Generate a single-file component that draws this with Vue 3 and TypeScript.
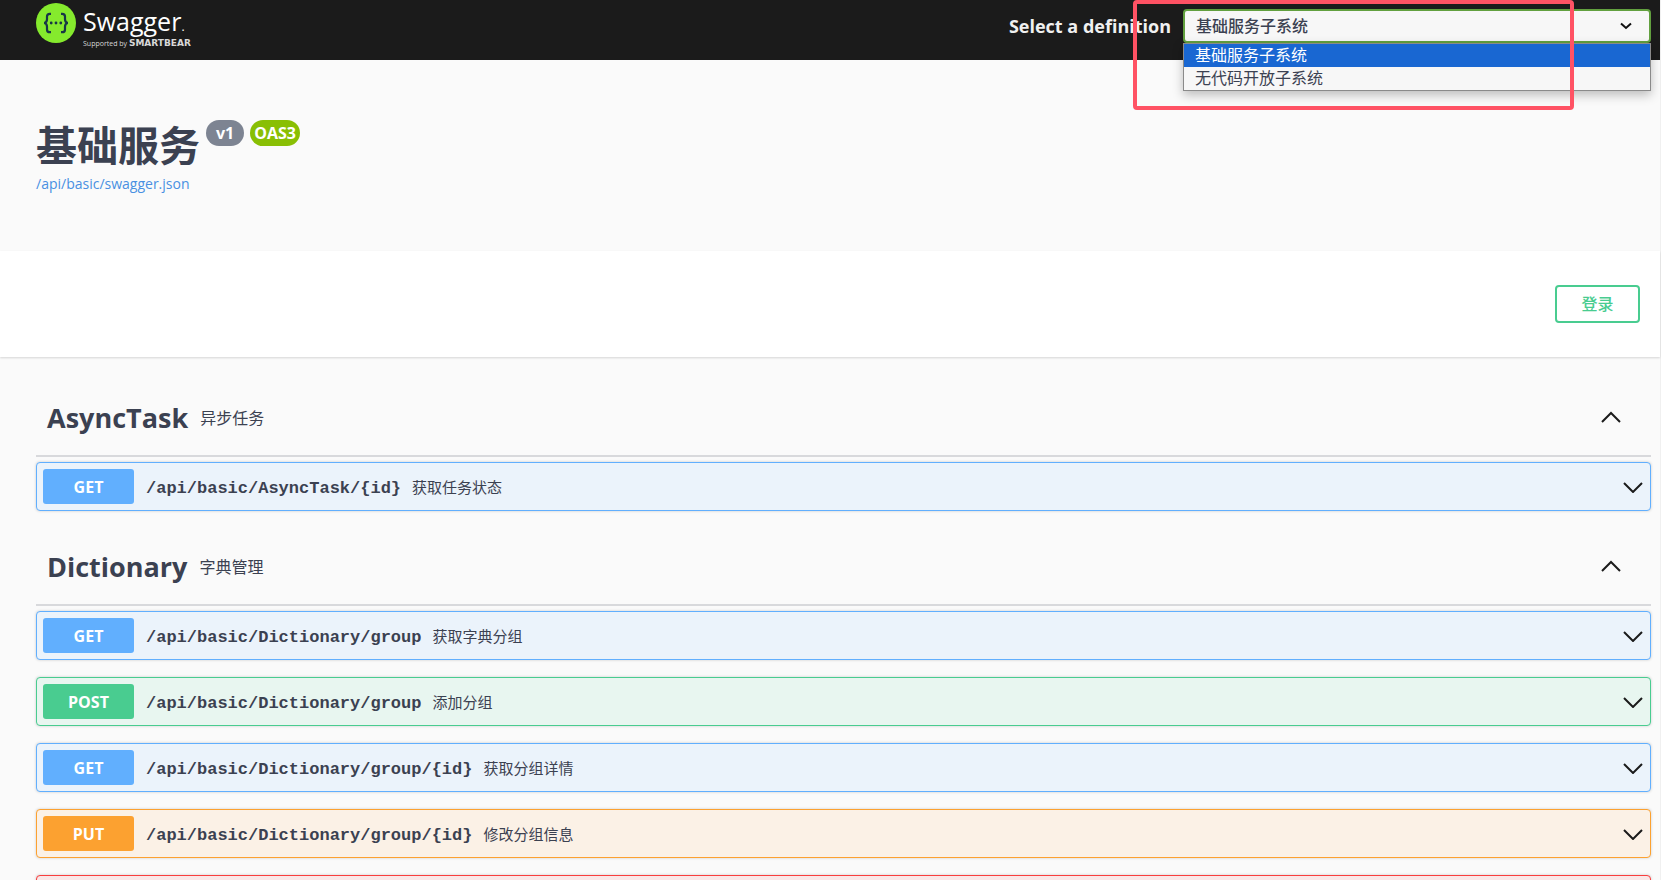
<script setup lang="ts">
import { ref } from 'vue'

type Method = 'get' | 'post' | 'put' | 'delete'

interface Operation {
  method: Method
  path: string
  summary: string
}

interface Tag {
  name: string
  description: string
  operations: Operation[]
}

const definitions: string[] = ['基础服务子系统', '无代码开放子系统']
const selected = ref<string>(definitions[0])

const tags: Tag[] = [
  {
    name: 'AsyncTask',
    description: '异步任务',
    operations: [{ method: 'get', path: '/api/basic/AsyncTask/{id}', summary: '获取任务状态' }],
  },
  {
    name: 'Dictionary',
    description: '字典管理',
    operations: [
      { method: 'get', path: '/api/basic/Dictionary/group', summary: '获取字典分组' },
      { method: 'post', path: '/api/basic/Dictionary/group', summary: '添加分组' },
      { method: 'get', path: '/api/basic/Dictionary/group/{id}', summary: '获取分组详情' },
      { method: 'put', path: '/api/basic/Dictionary/group/{id}', summary: '修改分组信息' },
    ],
  },
]
</script>

<template>
  <div class="page">
    <header class="topbar">
      <a class="logo" href="#">
        <svg class="logo-mark" viewBox="0 0 40 40" aria-hidden="true">
          <circle cx="20" cy="20" r="20" fill="#85ea2d" />
          <g fill="none" stroke="#173647" stroke-width="2.2">
            <path d="M15 10.8h-1.2c-2 0-2.8 1-2.8 2.8v2.6c0 2.4-.7 3.4-2.8 3.8 2.1.4 2.8 1.4 2.8 3.8v2.6c0 1.8.8 2.8 2.8 2.8H15" />
            <path d="M25 10.8h1.2c2 0 2.8 1 2.8 2.8v2.6c0 2.4.7 3.4 2.8 3.8-2.1.4-2.8 1.4-2.8 3.8v2.6c0 1.8-.8 2.8-2.8 2.8H25" />
          </g>
          <g fill="#173647">
            <circle cx="15.2" cy="20" r="1.4" />
            <circle cx="20" cy="20" r="1.4" />
            <circle cx="24.8" cy="20" r="1.4" />
          </g>
        </svg>
        <span class="logo-words">
          <span class="logo-name">Swagger<span class="logo-dot">.</span></span>
          <span class="logo-by">Supported by <b>SMARTBEAR</b></span>
        </span>
      </a>
      <div class="definition">
        <label for="definition">Select a definition</label>
        <div class="picker">
          <select id="definition" v-model="selected">
            <option v-for="d in definitions" :key="d" :value="d">{{ d }}</option>
          </select>
          <svg class="picker-arrow" viewBox="0 0 12 8" aria-hidden="true">
            <path d="M1 1.5l5 4.5 5-4.5" fill="none" stroke="#111" stroke-width="2" />
          </svg>
          <ul class="menu" role="listbox" aria-label="Select a definition">
            <li
              v-for="d in definitions"
              :key="d"
              role="option"
              :aria-selected="d === selected"
              :class="{ active: d === selected }"
              @click="selected = d"
            >{{ d }}</li>
          </ul>
          <div class="highlight"></div>
        </div>
      </div>
    </header>

    <section class="info">
      <h1>基础服务</h1>
      <span class="badge version">v1</span>
      <span class="badge oas">OAS3</span>
      <a class="spec" href="#">/api/basic/swagger.json</a>
    </section>

    <section class="auth">
      <button type="button" class="login">登录</button>
    </section>

    <main class="tags">
      <section v-for="tag in tags" :key="tag.name">
        <div class="tag">
          <h2>{{ tag.name }}</h2>
          <span class="tag-text">{{ tag.description }}</span>
          <button type="button" class="toggle" :aria-label="tag.name">
            <svg viewBox="0 0 20 12" aria-hidden="true"><path d="M1 11l9-9 9 9" /></svg>
          </button>
        </div>
        <div
          v-for="op in tag.operations"
          :key="op.method + op.path"
          class="operation"
          :class="op.method"
        >
          <button type="button" class="method">{{ op.method.toUpperCase() }}</button>
          <a class="path" href="#">{{ op.path }}</a>
          <span class="summary">{{ op.summary }}</span>
          <button type="button" class="toggle" :aria-label="op.path">
            <svg viewBox="0 0 20 12" aria-hidden="true"><path d="M1 2l9 9 9-9" /></svg>
          </button>
        </div>
      </section>
      <div class="operation delete"></div>
    </main>
  </div>
</template>

<style>
body {
  background: #fafafa;
}

#app {
  height: 100vh;
  overflow: hidden;
}
</style>

<style scoped>
.page {
  color: #3b4151;
  border-right: 1px solid #f0f0f0;
  font-family: "Open Sans", "Noto Sans CJK SC", sans-serif;
}

.page * {
  box-sizing: border-box;
}

button,
select {
  font-family: inherit;
  color: inherit;
  margin: 0;
}

a {
  text-decoration: none;
}

.topbar {
  display: flex;
  justify-content: space-between;
  height: 60px;
  padding: 0 9px 0 36px;
  background: #1b1b1b;
}

.logo {
  display: flex;
  gap: 7px;
  padding-top: 3px;
  color: #fff;
}

.logo-mark {
  width: 40px;
  height: 40px;
}

.logo-words {
  display: flex;
  flex-direction: column;
}

.logo-name {
  height: 35px;
  font-size: 25px;
  font-weight: 400;
  line-height: 37px;
}

.logo-dot {
  font-size: 12px;
}

.logo-by {
  color: #d8d8d8;
  font-size: 7px;
  font-weight: 400;
  line-height: 10px;
  white-space: nowrap;
}

.logo-by b {
  font-family: "DejaVu Sans", sans-serif;
  font-size: 9px;
  font-weight: 700;
}

.definition {
  display: flex;
  align-items: flex-start;
  gap: 12px;
  padding-top: 9px;
}

.definition label {
  color: #f0f0f0;
  font-size: 18px;
  font-weight: 700;
  line-height: 34px;
}

.picker {
  position: relative;
  width: 468px;
}

.picker select {
  appearance: none;
  display: block;
  width: 100%;
  height: 34px;
  padding: 0 40px 0 11px;
  border: 2px solid #62a03f;
  border-radius: 4px;
  background: #f7f7f7;
  font-size: 16px;
  font-weight: 500;
}

.picker-arrow {
  position: absolute;
  top: 13px;
  right: 19px;
  width: 12px;
  height: 8px;
}

.menu {
  position: absolute;
  top: 34px;
  left: 0;
  right: 0;
  margin: 0;
  padding: 0;
  border: 1px solid #8a8a8a;
  background: #f7f7f7;
  box-shadow: 0 4px 10px rgba(0, 0, 0, 0.25);
  list-style: none;
}

.menu li {
  height: 23px;
  padding: 0 11px;
  font-size: 16px;
  line-height: 23px;
}

.menu li.active {
  background: #1967d2;
  color: #fff;
}

.highlight {
  position: absolute;
  top: -9px;
  left: -50px;
  width: 441px;
  height: 110px;
  border: 4px solid #ff5264;
  border-radius: 4px;
  pointer-events: none;
}

.info {
  display: grid;
  grid-template-columns: auto auto auto 1fr;
  align-items: start;
  justify-items: start;
  padding: 60px 36px 54px;
}

.info h1 {
  margin: 0;
  font-size: 41px;
  font-weight: 700;
  line-height: 50px;
}

.badge {
  height: 26px;
  margin-left: 6px;
  border-radius: 13px;
  color: #fff;
  font-size: 16px;
  font-weight: 700;
  line-height: 26px;
}

.version {
  padding: 0 10px;
  background: #7d8492;
}

.oas {
  padding: 0 4px;
  background: #89bf04;
}

.spec {
  grid-column: 1 / -1;
  color: #4990e2;
  font-size: 14px;
  line-height: 27px;
}

.auth {
  display: flex;
  justify-content: flex-end;
  padding: 34px 20px;
  background: #fff;
  box-shadow: 0 1px 2px rgba(0, 0, 0, 0.15);
}

.login {
  width: 85px;
  height: 38px;
  padding: 0 0 2px;
  border: 2px solid #49cc90;
  border-radius: 4px;
  background: #fff;
  color: #49cc90;
  font-size: 16px;
  font-weight: 500;
}

.tags {
  padding: 22px 9px 0 36px;
}

.tag {
  display: flex;
  align-items: center;
  gap: 12px;
  height: 78px;
  margin-bottom: 5px;
  padding: 0 30px 0 11px;
  border-bottom: 2px solid #d8d9dc;
}

.tag h2 {
  margin: 0;
  font-size: 27px;
  font-weight: 700;
}

.tag-text {
  flex: 1;
  font-size: 16px;
}

.toggle {
  width: 20px;
  height: 12px;
  padding: 0;
  border: 0;
  background: none;
}

.toggle svg {
  display: block;
  width: 20px;
  height: 12px;
  fill: none;
  stroke: #1b1b1b;
  stroke-width: 2;
}

.operation {
  display: flex;
  align-items: center;
  height: 49px;
  margin-bottom: 17px;
  padding: 0 7px 0 6px;
  border: 1px solid;
  border-radius: 4px;
  box-shadow: 0 0 3px rgba(0, 0, 0, 0.19);
}

.method {
  width: 91px;
  height: 35px;
  padding: 0;
  border: 0;
  border-radius: 3px;
  color: #fff;
  font-size: 16px;
  font-weight: 700;
}

.path {
  margin-left: 12px;
  padding-top: 4px;
  color: #3b4151;
  font-family: "Liberation Mono", monospace;
  font-size: 17px;
  font-weight: 700;
}

.summary {
  flex: 1;
  margin-left: 11px;
  font-size: 15px;
}

.get {
  border-color: #61affe;
  background: #ebf3fb;
}

.get .method {
  background: #61affe;
}

.post {
  border-color: #49cc90;
  background: #e8f6f0;
}

.post .method {
  background: #49cc90;
}

.put {
  border-color: #fca130;
  background: #fbf1e6;
}

.put .method {
  background: #fca130;
}

.delete {
  border-color: #f93e3e;
  background: #fae7e7;
}
</style>
